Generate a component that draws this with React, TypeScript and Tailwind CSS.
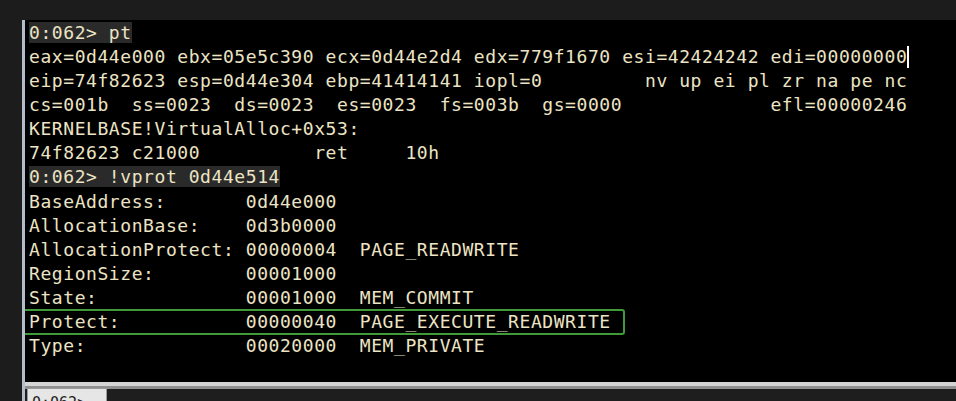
import React from "react";

const lines: { text: string; hl?: boolean; cursor?: boolean; box?: boolean }[] = [
  { text: "0:062> pt", hl: true },
  { text: "eax=0d44e000 ebx=05e5c390 ecx=0d44e2d4 edx=779f1670 esi=42424242 edi=00000000", cursor: true },
  { text: "eip=74f82623 esp=0d44e304 ebp=41414141 iopl=0         nv up ei pl zr na pe nc" },
  { text: "cs=001b  ss=0023  ds=0023  es=0023  fs=003b  gs=0000             efl=00000246" },
  { text: "KERNELBASE!VirtualAlloc+0x53:" },
  { text: "74f82623 c21000          ret     10h" },
  { text: "0:062> !vprot 0d44e514", hl: true },
  { text: "BaseAddress:       0d44e000" },
  { text: "AllocationBase:    0d3b0000" },
  { text: "AllocationProtect: 00000004  PAGE_READWRITE" },
  { text: "RegionSize:        00001000" },
  { text: "State:             00001000  MEM_COMMIT" },
  { text: "Protect:           00000040  PAGE_EXECUTE_READWRITE", box: true },
  { text: "Type:              00020000  MEM_PRIVATE" },
];

export default function App() {
  return (
    <div className="w-[956px] h-[401px] bg-[#1c1c1c] pt-[20px] pl-[22px] overflow-hidden">
      <div className="h-[381px] border-l-[3px] border-[#b3bccb] flex flex-col overflow-hidden">
        <div
          className="h-[362px] shrink-0 bg-black pt-[1px] pl-[4px] text-[#ece4c4] text-[18px] tracking-[0.57px] leading-[24.08px] whitespace-pre"
          style={{ fontFamily: '"DejaVu Sans Mono", "Liberation Mono", monospace' }}
        >
          {lines.map((l, i) => (
            <div key={i} className="relative h-[24.08px]">
              {l.hl ? <span className="bg-[#2a2a2a]">{l.text}</span> : l.text}
              {l.cursor && (
                <span className="inline-block w-[2px] h-[22px] bg-white align-[-5px]" />
              )}
              {l.box && (
                <div className="absolute left-[-7px] top-[-1px] w-[603px] h-[26px] border-2 border-[#3f9b3a] rounded-[3px]" />
              )}
            </div>
          ))}
        </div>
        <div className="h-[4px] shrink-0 bg-[#d4d4d4]" />
        <div className="h-[3px] shrink-0 bg-[#8f8f8f]" />
        <div className="h-[20px] shrink-0 bg-[#1e1e1e] flex">
          <div
            className="ml-[2px] w-[80px] h-[30px] mt-[-1px] bg-[#e6e6e6] border border-[#9a9a9a] text-[#222] text-[15px] leading-[18px] pl-[4px] pt-[5px] overflow-hidden"
            style={{ fontFamily: '"DejaVu Sans Mono", monospace' }}
          >
            0:062&gt;
          </div>
        </div>
      </div>
    </div>
  );
}
